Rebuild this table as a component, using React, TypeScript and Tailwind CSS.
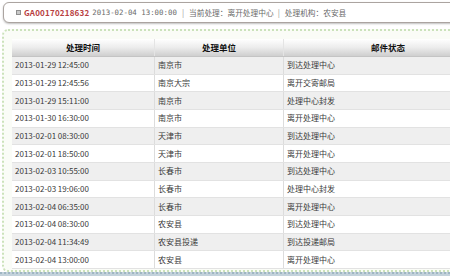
const rows = [
  ["2013-01-29 12:45:00", "南京市", "到达处理中心"],
  ["2013-01-29 12:45:56", "南京大宗", "离开交寄邮局"],
  ["2013-01-29 15:11:00", "南京市", "处理中心封发"],
  ["2013-01-30 16:30:00", "南京市", "离开处理中心"],
  ["2013-02-01 08:30:00", "天津市", "到达处理中心"],
  ["2013-02-01 18:50:00", "天津市", "离开处理中心"],
  ["2013-02-03 10:55:00", "长春市", "到达处理中心"],
  ["2013-02-03 19:06:00", "长春市", "处理中心封发"],
  ["2013-02-04 06:35:00", "长春市", "离开处理中心"],
  ["2013-02-04 08:30:00", "农安县", "到达处理中心"],
  ["2013-02-04 11:34:49", "农安县投递", "到达投递邮局"],
  ["2013-02-04 13:00:00", "农安县", "离开处理中心"],
]

const App = () => {
  return (
    <div className="w-[450px] h-[277px] overflow-hidden bg-white font-['Noto_Sans_CJK_SC',sans-serif] text-[8px] leading-none">
      {/* summary bar */}
      <div className="pt-[2px] pl-[3px]">
        <div className="w-[480px] h-[21px] flex items-center pl-[12px] border border-[#aba4a0] rounded-[6px] bg-white shadow-[0_1px_2px_rgba(0,0,0,0.25)] text-[#6a6a6a] whitespace-nowrap">
          <span className="w-[5px] h-[5px] bg-[#c9c9c9] border border-[#8f8f8f] mr-[3px]" />
          <span className="text-[#b8403f] font-bold text-[8px] tracking-[0.2px]">GA00170218632</span>
          <span className="ml-[3px] font-['DejaVu_Sans_Mono',monospace] text-[7.4px]">2013-02-04 13:00:00</span>
          <span className="ml-[5px] text-[#999]">|</span>
          <span className="ml-[5px] text-[7.7px]">当前处理：离开处理中心</span>
          <span className="ml-[4px] text-[#999]">|</span>
          <span className="ml-[5px] text-[7.7px]">处理机构：农安县</span>
        </div>
      </div>

      {/* tracking list */}
      <div className="mt-[6px] ml-[2px] w-[520px] h-[243px] border-l-2 border-t-2 border-b-2 border-dotted border-[#cbe2bb] rounded-tl-[6px] rounded-bl-[6px] bg-[#fafcf7] pt-[8px] pl-[8px]">
        <div className="w-[510px] bg-white text-[#3a3a3a]">
          <div className="flex h-[18px] bg-gradient-to-b from-white via-[#ececec] to-[#cfcfcf] border-b border-[#c4c4c4] font-bold text-[#111] text-[8.5px]">
            <div className="w-[143px] flex items-center justify-center border-r border-[#e4e4e4]">处理时间</div>
            <div className="w-[129px] flex items-center justify-center border-r border-[#e4e4e4]">处理单位</div>
            <div className="w-[208px] flex items-center justify-center">邮件状态</div>
          </div>
          {rows.map((r, i) => (
            <div
              key={i}
              className={`flex h-[17.67px] border-b border-[#e2e2e2] ${i % 2 === 0 ? "bg-[#efefef]" : "bg-white"}`}
            >
              <div className="w-[143px] flex items-center pl-[3px] border-r border-[#dcdcdc]">{r[0]}</div>
              <div className="w-[129px] flex items-center pl-[3px] border-r border-[#dcdcdc]">{r[1]}</div>
              <div className="w-[208px] flex items-center pl-[3px]">{r[2]}</div>
            </div>
          ))}
        </div>
      </div>
      <div className="h-[4px] border-t-2 border-dotted border-[#9fb6c3] bg-[#c3d2db]" />
    </div>
  )
}

export default App
